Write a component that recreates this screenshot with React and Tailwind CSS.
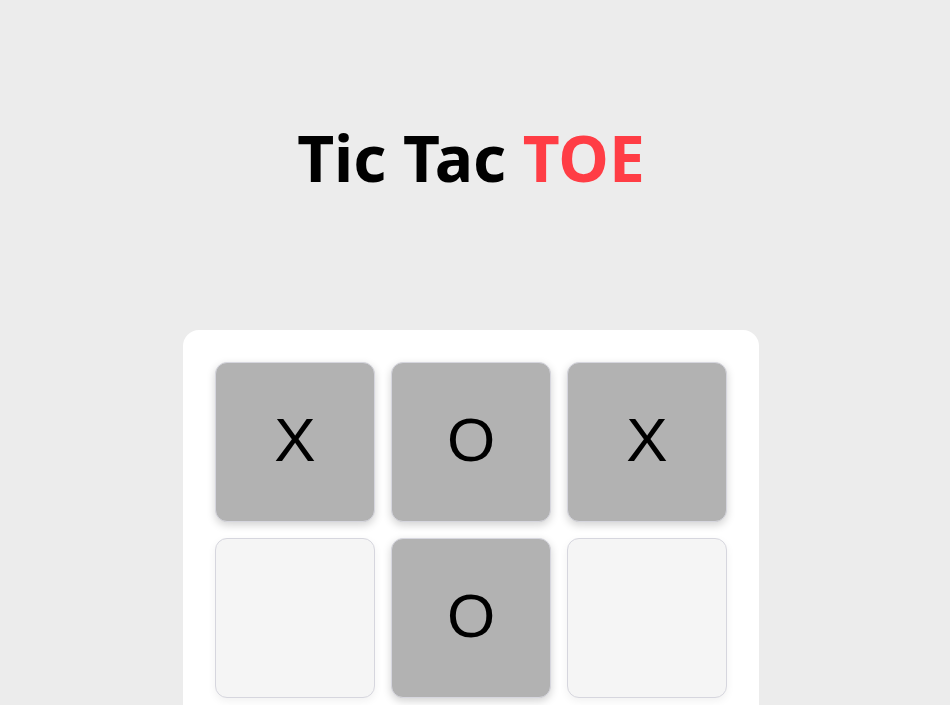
import React from "react";

const board = ["X", "O", "X", "", "O", "", "", "", ""];

export default function App() {
  return (
    <div className="min-h-screen bg-[#ececec] pr-[8px]" style={{ fontFamily: "'Noto Sans', sans-serif" }}>
      <div className="pt-[126px] flex flex-col items-center">
        <h1 className="text-[64px] leading-[64px] font-bold text-black">
          Tic Tac <span className="text-[#ff3d45]">TOE</span>
        </h1>
        <div className="mt-[140px] w-[576px] bg-white rounded-[16px] p-[32px] grid grid-cols-3 gap-[16px]">
          {board.map((v, i) => (
            <div
              key={i}
              className={
                "h-[160px] rounded-[12px] border border-[#d6d6de] flex items-center justify-center pb-[6px] text-[62px] text-black " +
                (v ? "bg-[#b2b2b2] shadow-[0_3px_8px_rgba(0,0,0,0.18)]" : "bg-[#f5f5f5] shadow-[0_3px_8px_rgba(0,0,0,0.06)]")
              }
              style={{ fontFamily: "'Liberation Sans', Arial, sans-serif" }}
            >
              {v}
            </div>
          ))}
        </div>
      </div>
    </div>
  );
}
